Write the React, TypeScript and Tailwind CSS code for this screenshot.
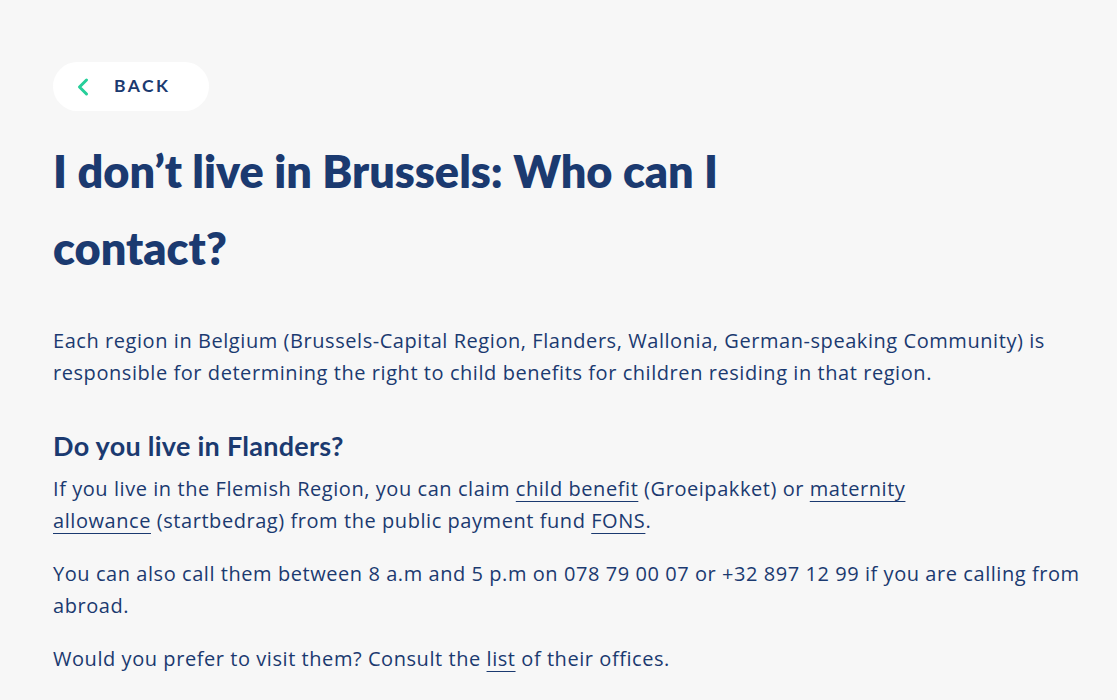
import { ChevronLeft } from 'lucide-react';

const body = "'Open Sans', 'Noto Sans', Arial, sans-serif";
const heading = "'Lato', 'Noto Sans', Arial, sans-serif";

function Link({ children }: { children: React.ReactNode }) {
  return (
    <a href="#" className="font-medium underline decoration-1 underline-offset-[5px] decoration-[#1b3a70]">
      {children}
    </a>
  );
}

export default function App() {
  return (
    <div className="min-h-[700px] bg-[#f7f7f7] text-[#1b3a70]" style={{ fontFamily: body }}>
      <div className="pl-[53px] pt-[62px] w-[1117px]">
        {/* Back button */}
        <button className="flex items-center h-[49px] w-[156px] rounded-full bg-white pl-[16px]">
          <ChevronLeft className="size-[28px] text-[#27cf9a]" strokeWidth={2.6} />
          <span
            className="ml-[17px] text-[17.5px] font-bold tracking-[0.14em] text-[#1b3a70]"
            style={{ fontFamily: heading }}
          >
            BACK
          </span>
        </button>

        {/* Title */}
        <h1
          className="mt-[22px] text-[45px] leading-[77px] font-extrabold max-w-[800px]"
          style={{ fontFamily: heading }}
        >
          I don’t live in Brussels: Who can I<br />contact?
        </h1>

        <p className="mt-[38px] text-[20px] leading-[32px] tracking-[0.028em] whitespace-nowrap">
          Each region in Belgium (Brussels-Capital Region, Flanders, Wallonia, German-speaking Community) is
          <br />
          responsible for determining the right to child benefits for children residing in that region.
        </p>

        <h2
          className="mt-[40px] text-[27px] leading-[34px] font-bold tracking-[0.01em]"
          style={{ fontFamily: heading }}
        >
          Do you live in Flanders?
        </h2>

        <div className="mt-[10px] flex flex-col gap-[21px] text-[20px] leading-[32px] tracking-[0.028em] whitespace-nowrap">
          <p>
            If you live in the Flemish Region, you can claim <Link>child benefit</Link> (Groeipakket) or{' '}
            <Link>
              maternity
              <br />
              allowance
            </Link>{' '}
            (startbedrag) from the public payment fund <Link>FONS</Link>.
          </p>
          <p>
            You can also call them between 8 a.m and 5 p.m on 078 79 00 07 or +32 897 12 99 if you are calling from
            <br />
            abroad.
          </p>
          <p>
            Would you prefer to visit them? Consult the <Link>list</Link> of their offices.
          </p>
        </div>
      </div>
    </div>
  );
}
